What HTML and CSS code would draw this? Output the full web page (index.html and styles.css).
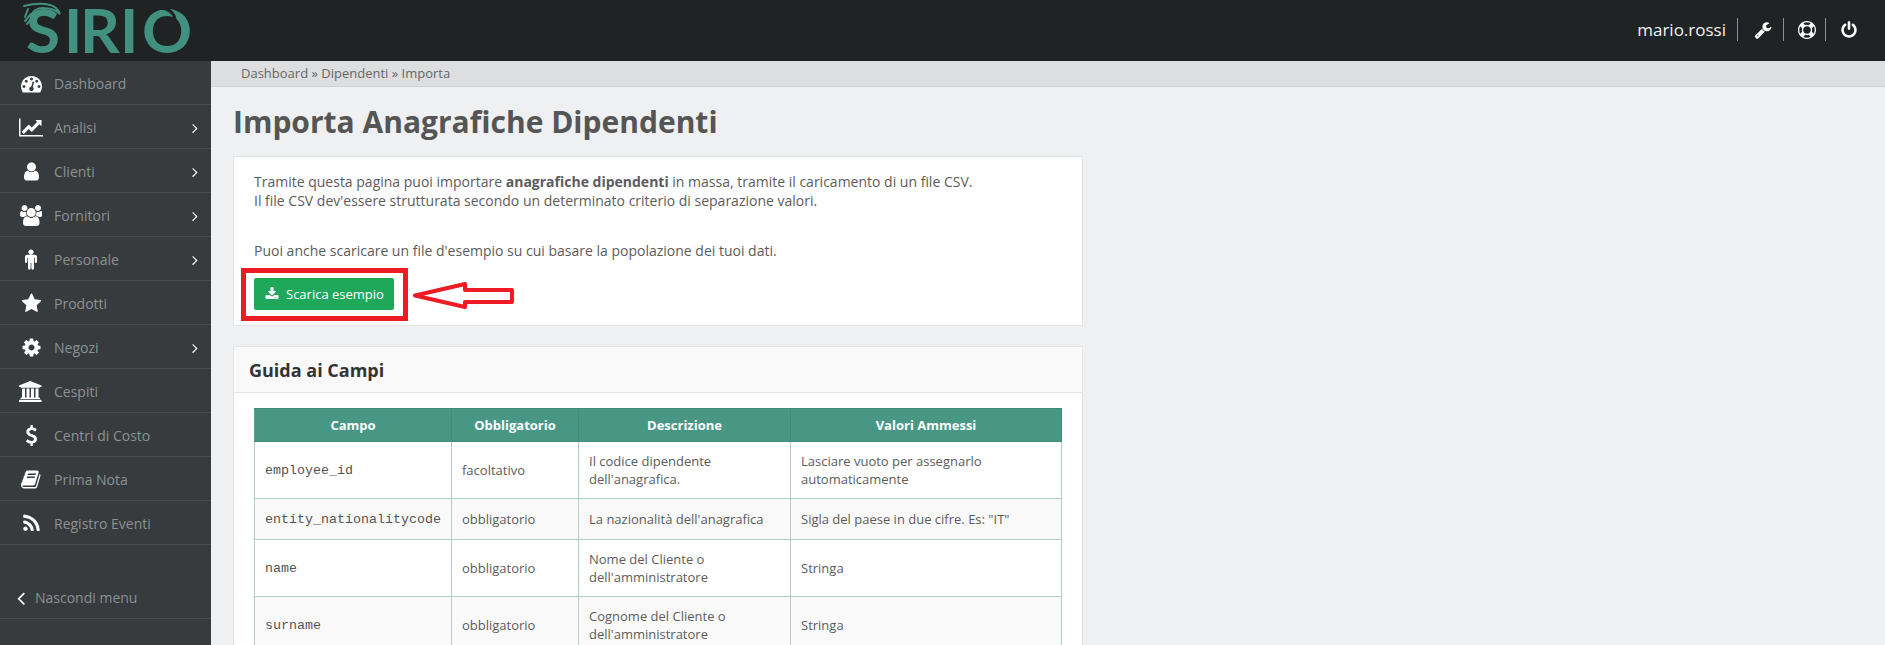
FILE: index.html
```html
<!DOCTYPE html>
<html lang="it">
<head>
<meta charset="utf-8">
<title>Importa Anagrafiche Dipendenti</title>
<link rel="stylesheet" href="styles.css">
</head>
<body>
<svg class="defs" width="0" height="0" aria-hidden="true">
  <symbol id="angle-right" viewBox="0 0 1792 1792"><path d="M1171 960q0 13-10 23l-466 466q-10 10-23 10t-23-10l-50-50q-10-10-10-23t10-23l393-393-393-393q-10-10-10-23t10-23l50-50q10-10 23-10t23 10l466 466q10 10 10 23z"/></symbol>
</svg>
<header class="topbar">
  <svg class="logo" viewBox="0 0 211 61" width="211" height="61" role="img" aria-label="Sirio">
    <text class="logo-text" y="53" x="26 64 80 120 142">SIRIO</text>
    <path class="logo-line" d="M24 6c8-2 18-3 26-1 5 1 8 4 10 9-5-5-11-6-17-6-6 0-11 3-12 9"/>
    <path class="logo-line" d="M28 9l-3 8M31 14l-6 7M32 18l-5 6"/>
    <path class="logo-swirl" d="M160 8c8 0 14 5 15 11 1 4-2 8-6 9"/>
  </svg>
  <div class="user">
    <span class="user-name">mario.rossi</span>
    <a class="user-action"><svg viewBox="0 0 1792 1792"><path d="M448 1472q0-26-19-45t-45-19-45 19-19 45 19 45 45 19 45-19 19-45zm644-420l-682 682q-37 37-90 37-52 0-91-37l-106-108q-38-36-38-90 0-53 38-91l681-681q39 98 114.5 173.5t173.5 114.5zm634-435q0 39-23 106-47 134-164.5 217.5t-258.5 83.5q-185 0-316.5-131.5t-131.5-316.5 131.5-316.5 316.5-131.5q58 0 121.5 16.5t107.5 46.5q16 11 16 28t-16 28l-293 169v224l193 107q5-3 79-48.5t135.5-81 70.5-35.5q15 0 23.5 10t8.5 25z"/></svg></a>
    <a class="user-action"><svg viewBox="0 0 1792 1792"><path d="M896 0q182 0 348 71t286 191 191 286 71 348-71 348-191 286-286 191-348 71-348-71-286-191-191-286-71-348 71-348 191-286 286-191 348-71zm0 128q-190 0-361 90l194 194q82-28 167-28t167 28l194-194q-171-90-361-90zm-678 1129l194-194q-28-82-28-167t28-167l-194-194q-90 171-90 361t90 361zm678 407q190 0 361-90l-194-194q-82 28-167 28t-167-28l-194 194q171 90 361 90zm0-384q159 0 271.5-112.5t112.5-271.5-112.5-271.5-271.5-112.5-271.5 112.5-112.5 271.5 112.5 271.5 271.5 112.5zm484-217l194 194q90-171 90-361t-90-361l-194 194q28 82 28 167t-28 167z"/></svg></a>
    <a class="user-action"><svg viewBox="0 0 1792 1792"><path d="M1664 896q0 156-61 298t-164 245-245 164-298 61-298-61-245-164-164-245-61-298q0-182 80.5-343t226.5-270q43-32 95.5-25t83.5 50q32 42 24.5 94.5t-49.5 84.5q-98 74-151.5 181t-53.5 228q0 104 40.5 198.5t109.5 163.5 163.5 109.5 198.5 40.5 198.5-40.5 163.5-109.5 109.5-163.5 40.5-198.5q0-121-53.5-228t-151.5-181q-42-32-49.5-84.5t24.5-94.5q31-43 84-50t95 25q146 109 226.5 270t80.5 343zm-640-768v640q0 52-38 90t-90 38-90-38-38-90v-640q0-52 38-90t90-38 90 38 38 90z"/></svg></a>
  </div>
</header>
<div class="layout">
  <nav class="sidebar">
    <a class="nav-item"><span class="nav-icon"><svg viewBox="0 0 1792 1792"><path d="M384 1152q0-53-37.5-90.5t-90.5-37.5-90.5 37.5-37.5 90.5 37.5 90.5 90.5 37.5 90.5-37.5 37.5-90.5zm192-448q0-53-37.5-90.5t-90.5-37.5-90.5 37.5-37.5 90.5 37.5 90.5 90.5 37.5 90.5-37.5 37.5-90.5zm428 481l101-382q6-26-7.5-48.5t-38.5-29.5-48 6.5-30 39.5l-101 382q-60 5-107 43.5t-63 98.5q-20 77 20 146t117 89 146-20 89-117q16-60-6-117t-72-91zm660-33q0-53-37.5-90.5t-90.5-37.5-90.5 37.5-37.5 90.5 37.5 90.5 90.5 37.5 90.5-37.5 37.5-90.5zm-640-640q0-53-37.5-90.5t-90.5-37.5-90.5 37.5-37.5 90.5 37.5 90.5 90.5 37.5 90.5-37.5 37.5-90.5zm448 192q0-53-37.5-90.5t-90.5-37.5-90.5 37.5-37.5 90.5 37.5 90.5 90.5 37.5 90.5-37.5 37.5-90.5zm320 448q0 261-141 483-19 29-54 29h-1402q-35 0-54-29-141-221-141-483 0-182 71-348t191-286 286-191 348-71 348 71 286 191 191 286 71 348z"/></svg></span><span class="nav-label">Dashboard</span></a>
    <a class="nav-item"><span class="nav-icon"><svg class="wide" viewBox="0 0 2048 1792"><path d="M2048 1536v128h-2048v-1536h128v1408h1920zm-128-1248v435q0 21-19.5 29.5t-35.5-7.5l-121-121-633 633q-10 10-23 10t-23-10l-233-233-416 416-192-192 585-585q10-10 23-10t23 10l233 233 464-464-121-121q-16-16-7.5-35.5t29.5-19.5h435q14 0 23 9t9 23z"/></svg></span><span class="nav-label">Analisi</span><svg class="nav-arrow"><use href="#angle-right"/></svg></a>
    <a class="nav-item"><span class="nav-icon"><svg viewBox="0 0 1792 1792"><path d="M1536 1399q0 109-62.5 187t-150.5 78h-854q-88 0-150.5-78t-62.5-187q0-85 8.5-160.5t31.5-152 58.5-131 94-89 134.5-34.5q131 128 313 128t313-128q76 0 134.5 34.5t94 89 58.5 131 31.5 152 8.5 160.5zm-256-887q0 159-112.5 271.5t-271.5 112.5-271.5-112.5-112.5-271.5 112.5-271.5 271.5-112.5 271.5 112.5 112.5 271.5z"/></svg></span><span class="nav-label">Clienti</span><svg class="nav-arrow"><use href="#angle-right"/></svg></a>
    <a class="nav-item"><span class="nav-icon"><svg class="mid" viewBox="0 0 1920 1792"><path d="M593 896q-162 5-265 128h-134q-82 0-138-40.5t-56-118.5q0-353 124-353 6 0 43.5 21t97.5 42.5 119 21.5q67 0 133-23-5 37-5 66 0 139 81 256zm1071 637q0 120-73 189.5t-194 69.5h-874q-121 0-194-69.5t-73-189.5q0-53 3.5-103.5t14-109 26.5-108.5 43-97.5 62-81 85.5-53.5 111.5-20q10 0 43 21.5t73 48 107 48 135 21.5 135-21.5 107-48 73-48 43-21.5q61 0 111.5 20t85.5 53.5 62 81 43 97.5 26.5 108.5 14 109 3.5 103.5zm-1024-1277q0 106-75 181t-181 75-181-75-75-181 75-181 181-75 181 75 75 181zm704 384q0 159-112.5 271.5t-271.5 112.5-271.5-112.5-112.5-271.5 112.5-271.5 271.5-112.5 271.5 112.5 112.5 271.5zm576 225q0 78-56 118.5t-138 40.5h-134q-103-123-265-128 81-117 81-256 0-29-5-66 66 23 133 23 59 0 119-21.5t97.5-42.5 43.5-21q124 0 124 353zm-128-609q0 106-75 181t-181 75-181-75-75-181 75-181 181-75 181 75 75 181z"/></svg></span><span class="nav-label">Fornitori</span><svg class="nav-arrow"><use href="#angle-right"/></svg></a>
    <a class="nav-item"><span class="nav-icon"><svg class="narrow" viewBox="0 0 1024 1792"><path d="M1024 672v416q0 40-28 68t-68 28-68-28-28-68v-352h-64v912q0 46-33 79t-79 33-79-33-33-79v-464h-64v464q0 46-33 79t-79 33-79-33-33-79v-912h-64v352q0 40-28 68t-68 28-68-28-28-68v-416q0-80 56-136t136-56h640q80 0 136 56t56 136zm-288-416q0 93-65.5 158.5t-158.5 65.5-158.5-65.5-65.5-158.5 65.5-158.5 158.5-65.5 158.5 65.5 65.5 158.5z"/></svg></span><span class="nav-label">Personale</span><svg class="nav-arrow"><use href="#angle-right"/></svg></a>
    <a class="nav-item"><span class="nav-icon"><svg viewBox="0 0 1792 1792"><path d="M1728 647q0 22-26 48l-363 354 86 500q1 7 1 20 0 21-10.5 35.5t-30.5 14.5q-19 0-40-12l-449-236-449 236q-22 12-40 12-21 0-31.5-14.5t-10.5-35.5q0-6 2-20l86-500-364-354q-25-27-25-48 0-37 56-46l502-73 225-455q19-41 49-41t49 41l225 455 502 73q56 9 56 46z"/></svg></span><span class="nav-label">Prodotti</span></a>
    <a class="nav-item"><span class="nav-icon"><svg viewBox="0 0 1792 1792"><path d="M1152 896q0-106-75-181t-181-75-181 75-75 181 75 181 181 75 181-75 75-181zm512-109v222q0 12-8 23t-20 13l-185 28q-19 54-39 91 35 50 107 138 10 12 10 25t-9 23q-27 37-99 108t-94 71q-12 0-26-9l-138-108q-44 23-91 38-16 136-29 186-7 28-36 28h-222q-14 0-24.5-8.5t-11.5-21.5l-28-184q-49-16-90-37l-141 107q-10 9-25 9-14 0-25-11-126-114-165-168-7-10-7-23 0-12 8-23 15-21 51-66.5t54-70.5q-27-50-41-99l-183-27q-13-2-21-12.5t-8-23.5v-222q0-12 8-23t19-13l186-28q14-46 39-92-40-57-107-138-10-12-10-24 0-10 9-23 26-36 98.5-107.5t94.5-71.5q13 0 26 10l138 107q44-23 91-38 16-136 29-186 7-28 36-28h222q14 0 24.5 8.5t11.5 21.5l28 184q49 16 90 37l142-107q9-9 24-9 13 0 25 10 129 119 165 170 7 8 7 22 0 12-8 23-15 21-51 66.5t-54 70.5q26 50 41 98l183 28q13 2 21 12.5t8 23.5z"/></svg></span><span class="nav-label">Negozi</span><svg class="nav-arrow"><use href="#angle-right"/></svg></a>
    <a class="nav-item"><span class="nav-icon"><svg class="wide" viewBox="0 0 2048 1792"><path d="M960 0l960 384v128h-128q0 26-20.5 45t-48.5 19h-1526q-28 0-48.5-19t-20.5-45h-128v-128zm-704 640h256v768h128v-768h256v768h128v-768h256v768h128v-768h256v768h59q28 0 48.5 19t20.5 45v64h-1664v-64q0-26 20.5-45t48.5-19h59v-768zm1595 960q28 0 48.5 19t20.5 45v128h-1920v-128q0-26 20.5-45t48.5-19h1782z"/></svg></span><span class="nav-label">Cespiti</span></a>
    <a class="nav-item"><span class="nav-icon"><svg viewBox="0 0 1792 1792"><path d="M1362 1185q0 153-99.5 263.5t-258.5 136.5v175q0 14-9 23t-23 9h-135q-13 0-22.5-9.5t-9.5-22.5v-175q-66-9-127.5-31t-101.5-44.5-74-48-46.5-37.5-17.5-18q-17-21-2-41l103-135q7-10 23-12 15-2 24 9l2 2q113 99 243 125 37 8 74 8 81 0 142.5-43t61.5-122q0-28-15-53t-33.5-42-58.5-37.5-66-32-80-32.5q-39-16-61.5-25t-61.5-26.5-62.5-31-56.5-35.5-53.5-42.5-43.5-49-35.5-58-21-66.5-8.5-78q0-138 98-242t255-134v-180q0-13 9.5-22.5t22.5-9.5h135q14 0 23 9t9 23v176q57 6 110.5 23t87 33.5 63.5 37.5 39 29 15 14q17 18 5 38l-81 146q-8 15-23 16-14 3-27-7-3-3-14.5-12t-39-26.5-58.5-32-74.5-26-85.5-11.5q-95 0-155 43t-60 111q0 26 8.5 48t29.5 41.5 39.5 33 56 31 60.5 27 70 27.5q53 20 81 31.5t76 35 75.5 42.5 62 50 53 63.5 31.5 76.5 13 94z"/></svg></span><span class="nav-label">Centri di Costo</span></a>
    <a class="nav-item"><span class="nav-icon"><svg viewBox="0 0 1792 1792"><path d="M1639 478q40 57 18 129l-275 906q-19 64-76.5 107.5t-122.5 43.5h-923q-77 0-148.5-53.5t-99.5-131.5q-24-67-2-127 0-4 3-27t4-37q1-8-3-21.5t-3-19.5q2-11 8-21t16.5-23.5 16.5-23.5q23-38 45-91.5t30-91.5q3-10 .5-30t-.5-28q3-11 17-28t17-23q21-36 42-92t25-90q1-9-2.5-32t.5-28q4-13 22-30.5t22-22.5q19-26 42.5-84.5t27.5-96.5q1-8-3-25.5t-2-26.5q2-8 9-18t18-23 17-21q8-12 16.5-30.5t15-35 16-36 19.5-32 26.5-23.5 36-11.5 47.5 5.5l-1 3q38-9 51-9h761q74 0 114 56t18 130l-274 906q-36 119-71.5 153.5t-128.5 34.5h-869q-27 0-38 15-11 16-1 43 24 70 144 70h923q29 0 56-15.5t35-41.5l300-987q7-22 5-57 38 15 59 43zm-1064 2q-4 13 2 22.5t20 9.5h608q13 0 25.5-9.5t16.5-22.5l21-64q4-13-2-22.5t-20-9.5h-608q-13 0-25.5 9.5t-16.5 22.5zm-83 256q-4 13 2 22.5t20 9.5h608q13 0 25.5-9.5t16.5-22.5l21-64q4-13-2-22.5t-20-9.5h-608q-13 0-25.5 9.5t-16.5 22.5z"/></svg></span><span class="nav-label">Prima Nota</span></a>
    <a class="nav-item"><span class="nav-icon"><svg viewBox="0 0 1792 1792"><path d="M576 1344q0 80-56 136t-136 56-136-56-56-136 56-136 136-56 136 56 56 136zm512 123q2 28-17 48-18 21-47 21h-135q-25 0-43-16.5t-20-41.5q-22-229-184.5-391.5t-391.5-184.5q-25-2-41.5-20t-16.5-43v-135q0-29 21-47 17-17 43-17h5q160 13 306 80.5t259 181.5q114 113 181.5 259t80.5 306zm512 2q2 27-18 47-18 20-46 20h-143q-26 0-44.5-17.5t-19.5-42.5q-12-215-101-408.5t-231.5-336-336-231.5-408.5-102q-25-1-42.5-19.5t-17.5-43.5v-143q0-28 20-46 18-18 44-18h3q262 13 501.5 120t425.5 294q187 186 294 425.5t120 501.5z"/></svg></span><span class="nav-label">Registro Eventi</span></a>
    <a class="nav-item nav-collapse"><svg class="collapse-icon" viewBox="0 0 1792 1792"><path d="M1203 544q0 13-10 23l-393 393 393 393q10 10 10 23t-10 23l-50 50q-10 10-23 10t-23-10l-466-466q-10-10-10-23t10-23l466-466q10-10 23-10t23 10l50 50q10 10 10 23z"/></svg><span class="nav-label">Nascondi menu</span></a>
  </nav>
  <main class="main">
    <div class="breadcrumb">Dashboard » Dipendenti » Importa</div>
    <div class="content">
      <h1 class="page-title">Importa Anagrafiche Dipendenti</h1>
      <section class="panel panel-intro">
        <p class="intro-text">Tramite questa pagina puoi importare <b>anagrafiche dipendenti</b> in massa, tramite il caricamento di un file CSV.<br>Il file CSV dev'essere strutturata secondo un determinato criterio di separazione valori.</p>
        <p class="intro-text intro-second">Puoi anche scaricare un file d'esempio su cui basare la popolazione dei tuoi dati.</p>
        <div class="download-wrap">
          <a class="btn-download"><svg viewBox="0 0 1792 1792"><path d="M1344 1344q0-26-19-45t-45-19-45 19-19 45 19 45 45 19 45-19 19-45zm256 0q0-26-19-45t-45-19-45 19-19 45 19 45 45 19 45-19 19-45zm128-224v320q0 40-28 68t-68 28h-1472q-40 0-68-28t-28-68v-320q0-40 28-68t68-28h465l135 136q58 56 136 56t136-56l136-136h464q40 0 68 28t28 68zm-325-569q17 41-14 70l-448 448q-18 19-45 19t-45-19l-448-448q-31-29-14-70 17-39 59-39h256v-448q0-26 19-45t45-19h256q26 0 45 19t19 45v448h256q42 0 59 39z"/></svg>Scarica esempio</a>
          <span class="mark-box"></span>
          <svg class="mark-arrow" width="104" height="30" viewBox="0 0 104 30"><path d="M4 13.500L54 2v6h47v12H54v5z"/></svg>
        </div>
      </section>
      <section class="panel">
        <h2 class="panel-title">Guida ai Campi</h2>
        <div class="panel-body">
          <table class="fields">
            <colgroup><col class="col-a"><col class="col-b"><col class="col-c"><col class="col-d"></colgroup>
            <thead><tr><th>Campo</th><th>Obbligatorio</th><th>Descrizione</th><th>Valori Ammessi</th></tr></thead>
            <tbody>
              <tr><td><code>employee_id</code></td><td>facoltativo</td><td>Il codice dipendente dell'anagrafica.</td><td>Lasciare vuoto per assegnarlo automaticamente</td></tr>
              <tr><td><code>entity_nationalitycode</code></td><td>obbligatorio</td><td>La nazionalità dell'anagrafica</td><td>Sigla del paese in due cifre. Es: "IT"</td></tr>
              <tr><td><code>name</code></td><td>obbligatorio</td><td>Nome del Cliente o dell'amministratore</td><td>Stringa</td></tr>
              <tr><td><code>surname</code></td><td>obbligatorio</td><td>Cognome del Cliente o dell'amministratore</td><td>Stringa</td></tr>
            </tbody>
          </table>
        </div>
      </section>
    </div>
  </main>
</div>
</body>
</html>
```
FILE: styles.css
```css
* { box-sizing: border-box; }
html, body { height: 100%; margin: 0; overflow: hidden; }
body {
  font-family: "Open Sans", sans-serif;
  font-size: 13px;
  color: #555;
  background: #eef0f2;
  display: flex;
  flex-direction: column;
}
.defs { position: absolute; }

.topbar {
  height: 61px;
  flex: none;
  background: #1f2324;
  display: flex;
  align-items: center;
  justify-content: space-between;
}
.logo { display: block; }
.logo-text {
  font-family: "Lato", sans-serif;
  font-size: 62px;
  font-weight: 700;
  fill: #42917f;
}
.logo-line { fill: none; stroke: #42917f; stroke-width: 2; stroke-linecap: round; }
.logo-swirl { fill: none; stroke: #1f2324; stroke-width: 3; stroke-linecap: round; }

.user { display: flex; align-items: center; padding: 0 18px 2px 0; }
.user-name {
  color: #f2f2f2;
  font-size: 17px;
  line-height: 23px;
  padding-right: 11px;
  border-right: 1px solid #8b8e8f;
}
.user-action {
  display: flex;
  justify-content: center;
  align-items: center;
  height: 23px;
  width: 46px;
  padding-left: 4px;
  border-right: 1px solid #8b8e8f;
}
.user-action svg { width: 18px; height: 18px; fill: #fff; display: block; }
.user-action:nth-child(3) { width: 42px; }
.user-action:last-child { border-right: 0; width: 41px; }

.layout { flex: 1; display: flex; min-height: 0; }
.sidebar { width: 211px; flex: none; background: #373b3d; }
.nav-item {
  height: 44px;
  display: flex;
  align-items: center;
  padding: 2px 0 0 19px;
  border-bottom: 1px solid #474b4d;
  color: #8c9194;
  font-size: 14px;
}
.nav-icon { width: 24px; height: 21px; margin-right: 11px; display: flex; justify-content: center; flex: none; }
.nav-icon svg { width: 21px; height: 21px; fill: #fff; display: block; }
.nav-icon svg.wide { width: 24px; }
.nav-icon svg.mid { width: 22.5px; }
.nav-icon svg.narrow { width: 12px; }
.nav-label { flex: 1; }
.nav-arrow { width: 16px; height: 16px; fill: #fff; margin-right: 8px; flex: none; }
.nav-collapse { margin-top: 30px; padding-left: 10px; }
.collapse-icon { width: 22px; height: 22px; fill: #fff; margin-right: 3px; flex: none; }

.main { flex: 1; min-width: 0; }
.breadcrumb {
  height: 26px;
  line-height: 24px;
  padding-left: 30px;
  background: #dcdee0;
  border-bottom: 1px solid #cfd1d3;
  color: #666;
}
.content { padding-left: 22px; width: 872px; }
.page-title {
  margin: 0;
  height: 69px;
  padding-top: 14px;
  font-size: 30px;
  line-height: 42px;
  font-weight: 700;
  color: #555;
}
.panel {
  width: 850px;
  background: #fff;
  border: 1px solid #e3e4e6;
  margin-bottom: 20px;
}
.panel-intro { padding: 15px 20px 15px; height: 170px; }
.intro-text { margin: 0; font-size: 14px; line-height: 19px; color: #5c5c5c; }
.intro-text b { font-weight: 700; }
.intro-second { margin-top: 31px; }
.download-wrap { position: relative; margin-top: 18px; display: inline-block; vertical-align: top; }
.btn-download {
  display: flex;
  align-items: center;
  width: 140px;
  height: 32px;
  padding-left: 11px;
  background: #1fa85a;
  border-radius: 2px;
  color: #fff;
  font-size: 13px;
}
.btn-download svg { width: 14px; height: 14px; fill: #fff; margin-right: 7px; }
.mark-box {
  position: absolute;
  left: -13px;
  top: -10px;
  width: 167px;
  height: 53px;
  border: 5px solid #ed1c24;
}
.mark-arrow {
  position: absolute;
  left: 157px;
  top: 4px;
}
.mark-arrow path { fill: #fff; stroke: #ed1c24; stroke-width: 4; stroke-linejoin: round; }

.panel-title {
  margin: 0;
  height: 46px;
  padding-left: 15px;
  font-size: 18px;
  line-height: 46px;
  font-weight: 700;
  color: #333;
  background: #f9f9f9;
  border-bottom: 1px solid #e5e5e5;
}
.panel-body { padding: 15px 20px; }
.fields {
  width: 807px;
  table-layout: fixed;
  border-collapse: collapse;
  font-size: 13px;
  line-height: 18px;
  color: #5c5c5c;
}
.col-a { width: 197px; }
.col-b { width: 127px; }
.col-c { width: 212px; }
.col-d { width: 271px; }
.fields th {
  height: 33px;
  padding: 0 10px;
  background: #489785;
  color: #fff;
  font-weight: 700;
  border: 1px solid #408b79;
  border-left-color: #5aa493;
  text-align: center;
}
.fields td {
  padding: 10px;
  border: 1px solid #afcfcb;
  vertical-align: middle;
}
.fields tbody tr:nth-child(even) td { background: #f9f9f9; }
code {
  font-family: "Liberation Mono", monospace;
  font-size: 13.33px;
  color: #555;
}
```
